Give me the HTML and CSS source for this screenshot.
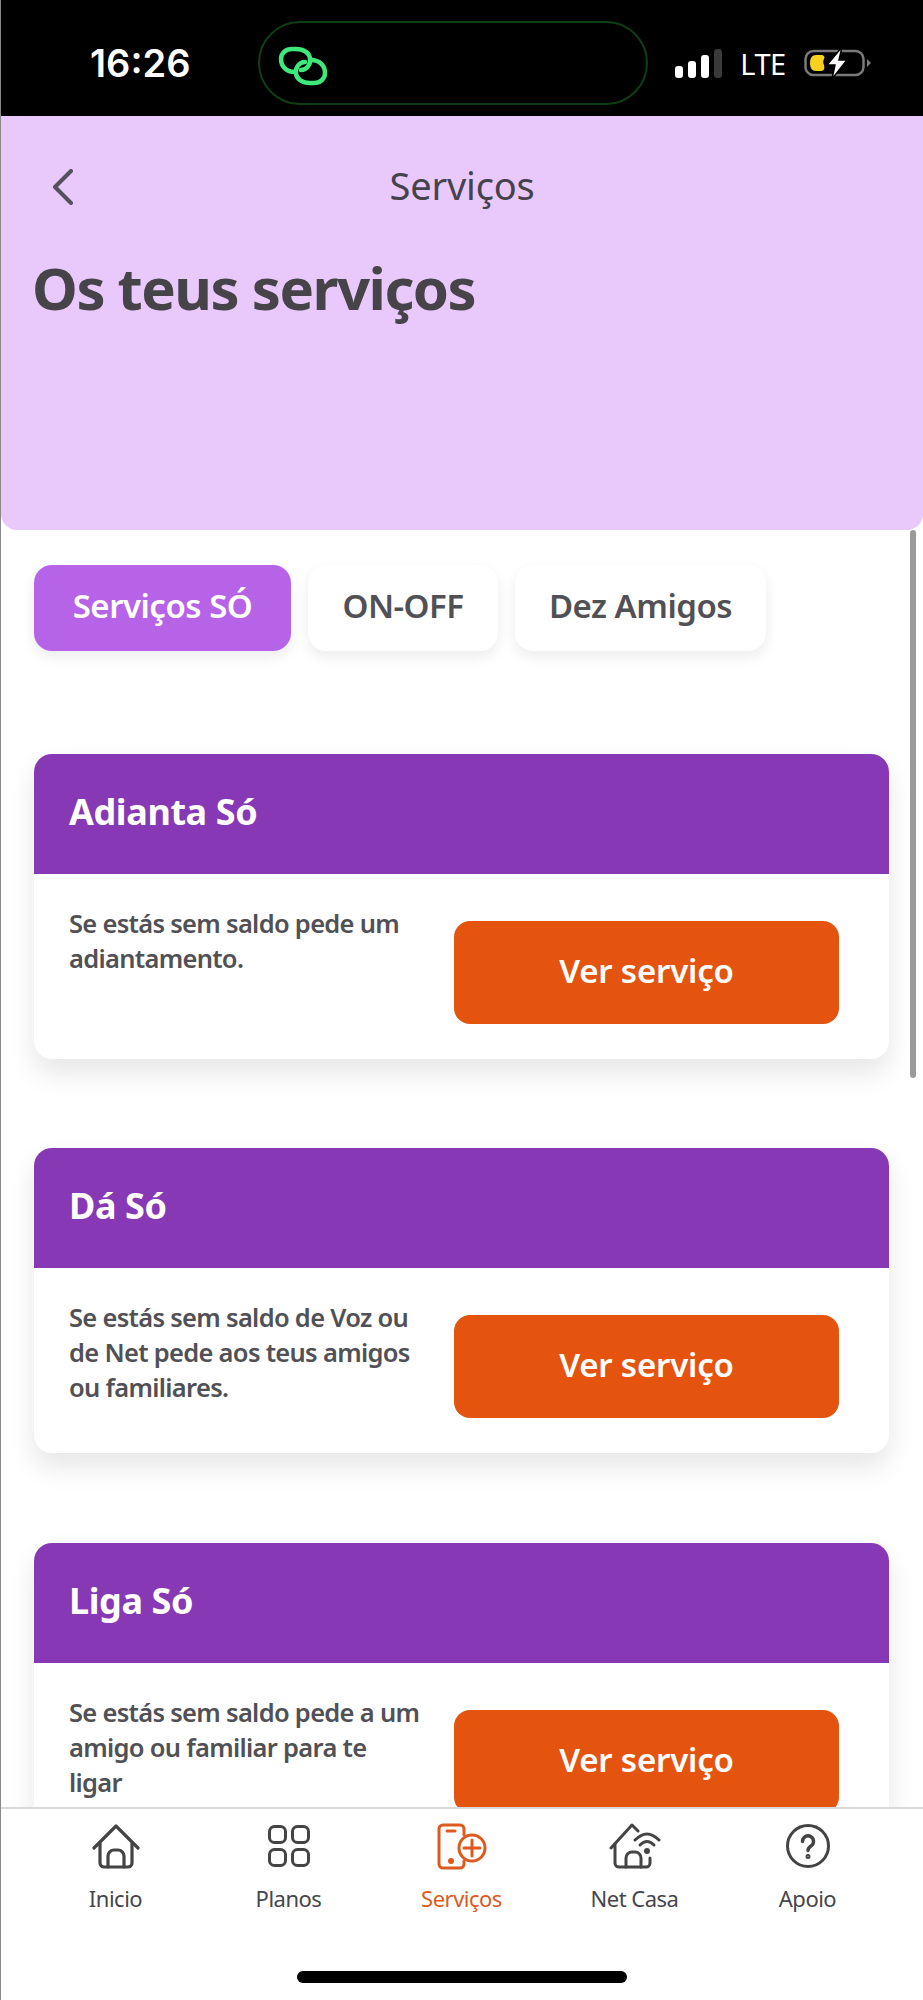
FILE: index.html
```html
<!DOCTYPE html>
<html lang="pt">
<head>
    <meta charset="UTF-8">
    <meta name="viewport" content="width=device-width, initial-scale=1.0">
    <title>Serviços</title>
    <link rel="stylesheet" href="styles.css">
</head>
<body>
    <div class="pantalla">
        <div class="status">
            <span class="hora">16:26</span>
            <div class="isla">
                <svg width="50" height="40" viewBox="0 0 50 40" fill="none" stroke="#3ee87a" stroke-width="4.5" stroke-linecap="round">
                    <path d="M17 26C8 26 3 20 3 13 3 7 8 3 14 3h4c8 0 13 4 14 9 1 6-3 12-9 12"/>
                    <path d="M33 14c9 0 14 6 14 13 0 6-5 10-11 10h-4c-8 0-13-4-14-9-1-6 3-12 9-12"/>
                </svg>
            </div>
            <div class="status-der">
                <svg width="47" height="29" viewBox="0 0 47 29" fill="#fff">
                    <rect x="0" y="17" width="8" height="12" rx="3"/>
                    <rect x="13" y="12" width="8" height="17" rx="3"/>
                    <rect x="26" y="6" width="8" height="23" rx="3"/>
                    <rect x="39" y="0" width="8" height="29" rx="3" fill="#3a3a3a"/>
                </svg>
                <span class="lte">LTE</span>
                <svg width="67" height="32" viewBox="0 0 67 32" fill="none">
                    <rect x="1.500" y="4" width="58" height="24" rx="8" stroke="#7a7a7a" stroke-width="2.500"/>
                    <path d="M12 8h5c3 0 4 2 3 4-1 2-1 4 0 6 1 3 0 6-3 6h-5c-4 0-6-3-6-8s2-8 6-8z" fill="#f7d020"/>
                    <path d="M63 12l4 4-4 4z" fill="#7a7a7a"/>
                    <path d="M38 0L23 18h8l-3 14 15-19h-8z" fill="#fff" stroke="#000" stroke-width="1.500"/>
                </svg>
            </div>
        </div>

        <div class="cabecera">
            <div class="cabecera-nav">
                <svg class="volver" width="24" height="36" viewBox="0 0 24 36" fill="none" stroke="#55505c" stroke-width="4" stroke-linecap="round" stroke-linejoin="round">
                    <path d="M20 2L4 18l16 16"/>
                </svg>
                <span class="cabecera-titulo">Serviços</span>
            </div>
            <h1>Os teus serviços</h1>
        </div>

        <div class="contenido">
            <div class="tabs">
                <div class="tab activo">Serviços SÓ</div>
                <div class="tab">ON-OFF</div>
                <div class="tab">Dez Amigos</div>
            </div>

            <div class="tarjeta">
                <div class="tarjeta-titulo">Adianta Só</div>
                <div class="tarjeta-cuerpo">
                    <p>Se estás sem saldo pede um adiantamento.</p>
                    <div class="boton">Ver serviço</div>
                </div>
            </div>

            <div class="tarjeta">
                <div class="tarjeta-titulo">Dá Só</div>
                <div class="tarjeta-cuerpo">
                    <p>Se estás sem saldo de Voz ou de Net pede aos teus amigos ou familiares.</p>
                    <div class="boton">Ver serviço</div>
                </div>
            </div>

            <div class="tarjeta">
                <div class="tarjeta-titulo">Liga Só</div>
                <div class="tarjeta-cuerpo">
                    <p>Se estás sem saldo pede a um amigo ou familiar para te ligar</p>
                    <div class="boton">Ver serviço</div>
                </div>
            </div>

            <div class="scroll"></div>
        </div>

        <div class="menu">
            <div class="menu-item">
                <svg width="48" height="48" viewBox="0 0 48 48" fill="none" stroke="#444" stroke-width="3.200" stroke-linecap="round" stroke-linejoin="round">
                    <path d="M2 26L24 4l22 22"/>
                    <path d="M8 21v20a4 4 0 0 0 4 4h24a4 4 0 0 0 4-4V21"/>
                    <path d="M16 45V34a6 6 0 0 1 6-6h4a6 6 0 0 1 6 6v11"/>
                </svg>
                <span>Inicio</span>
            </div>
            <div class="menu-item">
                <svg width="48" height="48" viewBox="0 0 48 48" fill="none" stroke="#444" stroke-width="3">
                    <rect x="4.500" y="4.500" width="16" height="16" rx="5"/>
                    <rect x="27.500" y="4.500" width="16" height="16" rx="5"/>
                    <rect x="4.500" y="27.500" width="16" height="16" rx="5"/>
                    <rect x="27.500" y="27.500" width="16" height="16" rx="5"/>
                </svg>
                <span>Planos</span>
            </div>
            <div class="menu-item activo">
                <svg width="50" height="48" viewBox="0 0 50 48" fill="none" stroke="#dd5a1e" stroke-width="3" stroke-linecap="round" stroke-linejoin="round">
                    <path d="M27 13V7a4 4 0 0 0-4-4H6a4 4 0 0 0-4 4v35a4 4 0 0 0 4 4h17a4 4 0 0 0 4-4v-3"/>
                    <path d="M10 9h8"/>
                    <circle cx="14" cy="39" r="1.500"/>
                    <circle cx="35" cy="26" r="13"/>
                    <path d="M35 18v16M27 26h16"/>
                </svg>
                <span>Serviços</span>
            </div>
            <div class="menu-item">
                <svg width="52" height="48" viewBox="0 0 52 48" fill="none" stroke="#444" stroke-width="3" stroke-linecap="round" stroke-linejoin="round">
                    <path d="M2 26L23 3l6 6"/>
                    <path d="M6 22v19a4 4 0 0 0 4 4h27a4 4 0 0 0 4-4v-5"/>
                    <path d="M17 45V36a6 6 0 0 1 6-6h3a6 6 0 0 1 6 6v9"/>
                    <path d="M26 18Q38 6 50 18"/>
                    <path d="M31 23q7-7 14 0"/>
                    <circle cx="38" cy="29" r="1.500"/>
                </svg>
                <span>Net Casa</span>
            </div>
            <div class="menu-item">
                <svg width="48" height="48" viewBox="0 0 48 48" fill="none" stroke="#444" stroke-width="3" stroke-linecap="round">
                    <circle cx="24" cy="24" r="20.500"/>
                    <path d="M18.500 19.500a5.500 5.500 0 1 1 8.500 4.500c-2 1.300-3 2.300-3 4.500" stroke-width="3.400"/>
                    <circle cx="24" cy="34.500" r="1"/>
                </svg>
                <span>Apoio</span>
            </div>
        </div>
        <div class="home-bar"></div>
    </div>
</body>
</html>
```

FILE: styles.css
```css
body {
    margin: 0;
    background-color: #fff;
    font-family: "Noto Sans", sans-serif;
}

.pantalla {
    width: 923px;
    height: 2000px;
    display: flex;
    flex-direction: column;
    overflow: hidden;
    position: relative;
    box-sizing: border-box;
    border-left: 1px solid #8a8a8a;
}

/* Barra de estado */
.status {
    height: 116px;
    flex: none;
    margin-left: -1px;
    background-color: #000;
    display: flex;
    align-items: center;
    color: #fff;
    box-sizing: border-box;
    padding: 10px 0 0 90px;
}

.hora {
    font-family: "Inter", sans-serif;
    font-size: 38px;
    font-weight: 600;
    width: 168px;
    flex: none;
}

.isla {
    width: 390px;
    height: 84px;
    flex: none;
    box-sizing: border-box;
    border: 2px solid #103e14;
    border-radius: 42px;
    display: flex;
    align-items: center;
    padding: 6px 0 0 18px;
}

.status-der {
    display: flex;
    align-items: center;
    margin-left: 27px;
}

.lte {
    width: 82px;
    text-align: center;
    font-size: 29px;
    letter-spacing: -0.5px;
}

/* Cabecera */
.cabecera {
    height: 414px;
    flex: none;
    box-sizing: border-box;
    background-color: #e9c9fb;
    border-radius: 0 0 16px 16px;
    padding: 51px 32px 0;
}

.cabecera-nav {
    position: relative;
    display: flex;
    justify-content: center;
    align-items: center;
    height: 36px;
}

.volver {
    position: absolute;
    left: 18px;
    top: 2px;
}

.cabecera-titulo {
    font-size: 38px;
    letter-spacing: -0.2px;
    color: #46424b;
}

h1 {
    margin: 49px 0 0 -1px;
    font-size: 58px;
    line-height: 72px;
    font-weight: 700;
    letter-spacing: -1.5px;
    color: #464349;
}

/* Contenido */
.contenido {
    flex: 1;
    min-height: 0;
    overflow: hidden;
    position: relative;
    padding: 35px 34px 0 33px;
}

.tabs {
    display: grid;
    grid-template-columns: 257px 190px 251px;
    gap: 17px;
    margin-bottom: 103px;
}

.tab {
    height: 86px;
    box-sizing: border-box;
    padding-bottom: 6px;
    display: flex;
    justify-content: center;
    align-items: center;
    border-radius: 18px;
    background-color: #fff;
    color: #515155;
    font-size: 33px;
    font-weight: 600;
    letter-spacing: -0.5px;
    box-shadow: 0 6px 14px rgba(0, 0, 0, 0.08);
}

.tab.activo {
    background-color: #b663e8;
    color: #fff;
}

.tarjeta {
    border-radius: 18px;
    background-color: #fff;
    box-shadow: 0 14px 28px rgba(0, 0, 0, 0.1);
    margin-bottom: 89.250px;
}

.tarjeta-titulo {
    height: 120px;
    box-sizing: border-box;
    padding: 0 35px 5px;
    display: flex;
    align-items: center;
    background-color: #8738b5;
    border-radius: 18px 18px 0 0;
    color: #fff;
    font-size: 36px;
    font-weight: 700;
    letter-spacing: -0.4px;
}

.tarjeta-cuerpo {
    height: 185px;
    box-sizing: border-box;
    padding: 32px 50px 0 35px;
    display: flex;
    justify-content: space-between;
    align-items: flex-start;
}

.tarjeta-cuerpo p {
    margin: 0;
    width: 352px;
    font-size: 25.500px;
    line-height: 35px;
    font-weight: 600;
    letter-spacing: -0.7px;
    color: #515155;
}

.boton {
    width: 385px;
    height: 103px;
    flex: none;
    margin-top: 15px;
    box-sizing: border-box;
    padding-bottom: 4px;
    display: flex;
    justify-content: center;
    align-items: center;
    border-radius: 16px;
    background-color: #e4540f;
    color: #fff;
    font-size: 33px;
    font-weight: 600;
    letter-spacing: -0.2px;
}

.scroll {
    position: absolute;
    top: 0;
    right: 7px;
    width: 6px;
    height: 548px;
    border-radius: 3px;
    background-color: #9a9a9a;
}

/* Menu inferior */
.menu {
    height: 193px;
    flex: none;
    box-sizing: border-box;
    background-color: #fff;
    border-top: 2px solid #d8d8d8;
    padding: 13px 29px 0 28px;
    display: grid;
    grid-template-columns: repeat(5, 1fr);
    align-items: start;
}

.menu-item {
    display: flex;
    flex-direction: column;
    align-items: center;
    gap: 13px;
    font-size: 22px;
    line-height: 30px;
    letter-spacing: -0.5px;
    color: #46464a;
}

.menu-item.activo {
    color: #dd5a1e;
}

.home-bar {
    position: absolute;
    left: 296px;
    bottom: 17px;
    width: 330px;
    height: 12px;
    border-radius: 6px;
    background-color: #000;
}
```
